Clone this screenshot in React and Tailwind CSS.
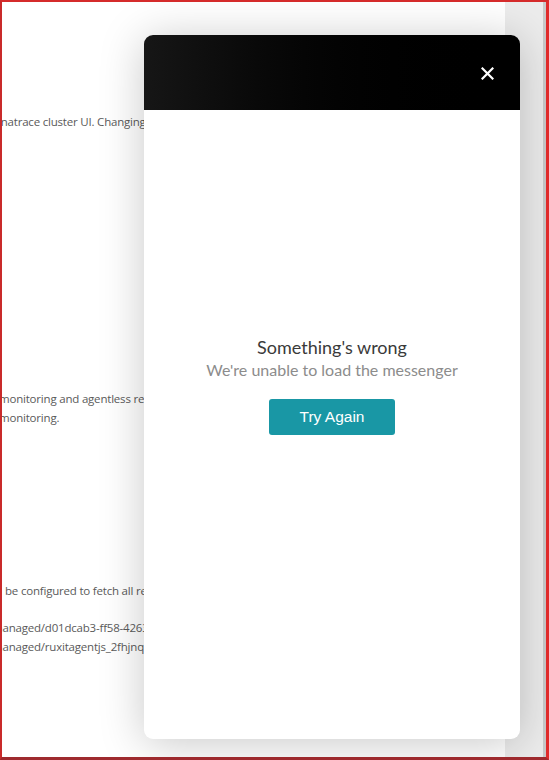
import React from "react";

const lines = [
  { cls: "mt-[113px] -ml-[15px]", text: "Dynatrace cluster UI. Changing the environment settings" },
  { cls: "mt-[263px] -ml-[3px]", text: "monitoring and agentless real user monitoring" },
  { cls: "mt-[5px] -ml-[3px]", text: "monitoring." },
  { cls: "mt-[159px] ml-[3px]", text: "be configured to fetch all required files" },
  { cls: "mt-[23px] -ml-[10px]", text: "managed/d01dcab3-ff58-4263-a2b4" },
  { cls: "mt-[5px] -ml-[10px]", text: "managed/ruxitagentjs_2fhjnqrtx" },
];

export default function App() {
  return (
    <div className="relative h-[760px] w-[549px] overflow-hidden border-t-2 border-l-2 border-r-[3px] border-b-[3px] border-t-[#d52b2b] border-l-[#c92a2a] border-r-[#e02a2a] border-b-[#9e2a2e] bg-white">
      <div className="flex h-full">
        <div className="flex-1 overflow-hidden bg-white">
          <div className="flex flex-col text-[11.5px] leading-[14px] tracking-[-0.2px] text-[#5a5a5a] [font-family:'Open_Sans',sans-serif]">
            {lines.map((l, i) => (
              <div key={i} className={`${l.cls} whitespace-nowrap`}>
                {l.text}
              </div>
            ))}
          </div>
        </div>
        <div className="w-[38px] bg-[#ececec]" />
        <div className="w-[3px] bg-[#c9c9c9]" />
      </div>

      <div className="absolute left-[142px] top-[33px] flex h-[704px] w-[376px] flex-col overflow-hidden rounded-[9px] bg-white shadow-[0_4px_45px_rgba(0,0,0,0.22)]">
        <div className="flex h-[75px] items-center justify-end bg-gradient-to-r from-[#161616] to-[#000000] pr-[23px] pt-[2px]">
          <button className="flex h-[20px] w-[20px] items-center justify-center">
            <svg width="13" height="13" viewBox="0 0 13 13" fill="none">
              <path d="M1.5 1.5L11.5 11.5M11.5 1.5L1.5 11.5" stroke="white" strokeWidth="2.2" strokeLinecap="square" />
            </svg>
          </button>
        </div>
        <div className="flex flex-1 flex-col items-center pt-[226px]">
          <div className="text-[18px] leading-[22px] text-[#3a3a3a] [font-family:Lato,sans-serif]">
            Something's wrong
          </div>
          <div className="mt-[2px] text-[16px] leading-[20px] text-[#8c8c8c] [font-family:Lato,sans-serif]">
            We're unable to load the messenger
          </div>
          <button className="mt-[19px] flex h-[36px] w-[126px] items-center justify-center rounded-[3px] bg-[#1997a5] text-[15.5px] text-white [font-family:'Liberation_Sans',Arial,sans-serif]">
            Try Again
          </button>
        </div>
      </div>
    </div>
  );
}
